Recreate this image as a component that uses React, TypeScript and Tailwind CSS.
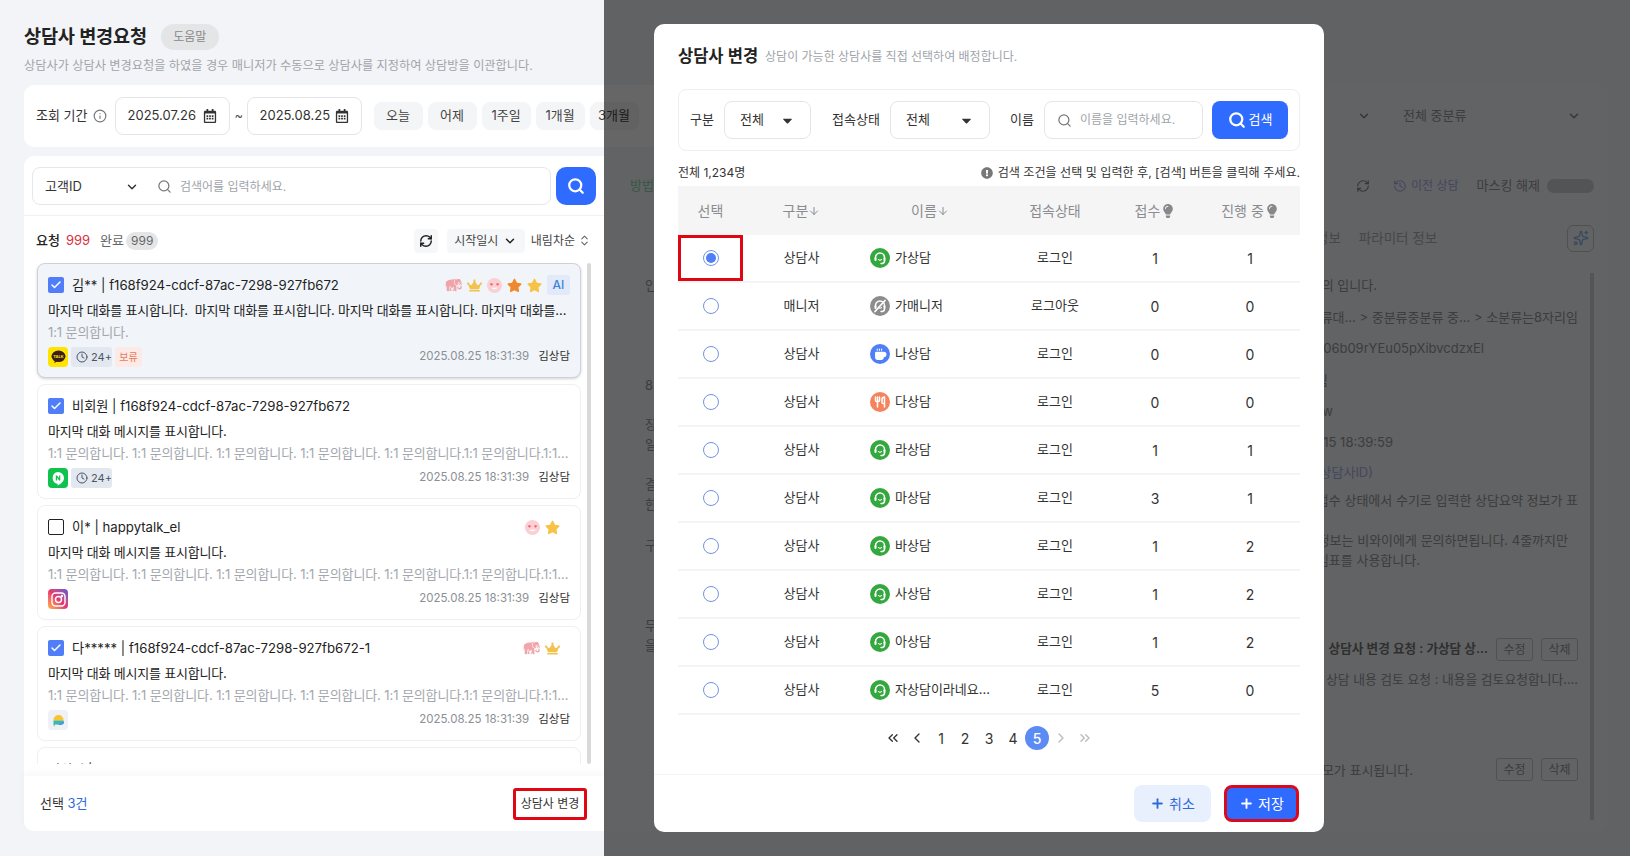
import React from "react";
import {
  Check, ChevronDown, ChevronLeft, ChevronRight, ChevronsLeft, ChevronsRight, ChevronsUpDown,
  Clock, Coffee, History, Info, Plus, RefreshCw, Search, Sparkles, Utensils, ArrowDown,
} from "lucide-react";
import { FaCrown, FaStar, FaRegCalendarAlt, FaExclamationCircle, FaLightbulb, FaCaretDown } from "react-icons/fa";
import { GiElephant } from "react-icons/gi";

const Elephant = () => <GiElephant className="w-[18px] h-[18px] text-[#f08f96] opacity-80" />;
const Crown = () => <FaCrown className="w-[15px] h-[15px] text-[#f2c14e]" />;
const Face = () => (
  <svg width="17" height="17" viewBox="0 0 18 18">
    <circle cx="9" cy="9" r="8" fill="#fbd0d4" />
    <path d="M4 7.5c1-1.3 2.6-1.3 3.5 0l-1.7 1.8zM10.500 7.500c1-1.300 2.600-1.300 3.500 0l-1.700 1.800z" fill="#ee5a64" />
    <path d="M5.500 11.500c1.800 1.800 5.200 1.800 7 0z" fill="#fff" />
  </svg>
);
const StarO = () => <FaStar className="w-[15px] h-[15px] text-[#ee8a2d]" />;
const StarY = () => <FaStar className="w-[15px] h-[15px] text-[#f6c344]" />;
const Slot = ({ children }: { children: React.ReactNode }) => (
  <span className="w-5 h-5 flex items-center justify-center">{children}</span>
);

const Kakao = () => (
  <span className="w-5 h-5 rounded-[4px] bg-[#fee500] flex items-center justify-center">
    <svg width="15" height="14" viewBox="0 0 15 14">
      <ellipse cx="7.500" cy="6.300" rx="7" ry="5.800" fill="#3b1e1e" />
      <path d="M4 10l-.7 3.300 3.400-2.500z" fill="#3b1e1e" />
      <text x="7.500" y="7.800" textAnchor="middle" fontSize="4" fontWeight="700" fill="#fee500" fontFamily="Inter, sans-serif">TALK</text>
    </svg>
  </span>
);
const Naver = () => (
  <span className="w-5 h-5 rounded-[4px] bg-[#0fc14d] flex items-center justify-center">
    <svg width="14" height="15" viewBox="0 0 14 15">
      <path d="M7 1a6 6 0 0 1 6 6c0 3.600-3.500 6-6.500 7.500l.3-1.600A6 6 0 0 1 7 1z" fill="#fff" />
      <path d="M4.800 4.500h1.300l2 2.800V4.500h1.200v5H8.100l-2-2.800v2.800H4.800z" fill="#0fc14d" />
    </svg>
  </span>
);
const Insta = () => (
  <span className="w-5 h-5 rounded-[4px] bg-gradient-to-tr from-[#fdb13f] via-[#e8316f] to-[#5a4fd0] flex items-center justify-center">
    <svg width="15" height="15" viewBox="0 0 15 15" fill="none" stroke="#fff" strokeWidth="1.400">
      <rect x="1" y="1" width="13" height="13" rx="3.500" />
      <circle cx="7.500" cy="7.500" r="3" />
      <circle cx="11" cy="4" r=".5" fill="#fff" />
    </svg>
  </span>
);
const Channel = () => (
  <span className="w-5 h-5 rounded-[4px] bg-[#eef1f6] flex items-center justify-center">
    <svg width="13" height="13" viewBox="0 0 13 13">
      <path d="M1.500 6a5 5 0 0 1 10 0v.500h-10z" fill="#f7c531" />
      <path d="M1.500 6.500h10c0 2.400-2 4-5 4H3l-.8 2-.7-2z" fill="#3fb6a8" />
      <path d="M5 10.500c3 0 6-1 6.500-4L12 9c-1 2-4 2.500-7 1.500z" fill="#3d7df0" />
    </svg>
  </span>
);
const Wait = () => (
  <span className="h-5 pl-[5px] w-[41px] rounded-[3px] bg-[#e3e8f0] flex items-center gap-[3px] text-[11px] text-[#4b5563]">
    <Clock className="w-3 h-3" strokeWidth={2} />
    24+
  </span>
);
const Box = ({ on }: { on: boolean }) =>
  on ? (
    <span className="w-4 h-4 rounded-[2px] bg-[#4f7ef8] flex items-center justify-center">
      <Check className="w-3 h-3 text-white" strokeWidth={3} />
    </span>
  ) : (
    <span className="w-4 h-4 rounded-[2px] border border-[#222] bg-white" />
  );

type CardData = {
  on: boolean; name: string; last: string; ask: string; channel: React.ReactNode;
  marks?: React.ReactNode[]; ai?: boolean; wait?: boolean; hold?: boolean; active?: boolean; noBox?: boolean;
};
const long = "1:1 문의합니다. 1:1 문의합니다. 1:1 문의합니다. 1:1 문의합니다. 1:1 문의합니다.1:1 문의합니다.1:1 문의합니다.1:1 문의합니다.";
const cards: CardData[] = [
  {
    on: true, name: "김** | f168f924-cdcf-87ac-7298-927fb672",
    last: "마지막 대화를 표시합니다.  마지막 대화를 표시합니다. 마지막 대화를 표시합니다. 마지막 대화를 표시합니다. 마지막 대화를 표시합니다.",
    ask: "1:1 문의합니다.", channel: <Kakao />, marks: [<Elephant />, <Crown />, <Face />, <StarO />, <StarY />], ai: true, wait: true, hold: true, active: true,
  },
  { on: true, name: "비회원 | f168f924-cdcf-87ac-7298-927fb672", last: "마지막 대화 메시지를 표시합니다.", ask: long, channel: <Naver />, wait: true },
  { on: false, name: "이* | happytalk_el", last: "마지막 대화 메시지를 표시합니다.", ask: long, channel: <Insta />, marks: [<Face />, <StarY />] },
  { on: true, name: "다***** | f168f924-cdcf-87ac-7298-927fb672-1", last: "마지막 대화 메시지를 표시합니다.", ask: long, channel: <Channel />, marks: [<Elephant />, <Crown />] },
  { on: false, noBox: true, name: "비회원 | f168f924-cdcf-87ac-7298-927fb672", last: "마지막 대화 메시지를 표시합니다.", ask: long, channel: <Naver /> },
];

const Card = ({ c }: { c: CardData }) => (
  <div className={`shrink-0 h-[115px] rounded-[8px] border pl-[10px] pr-[10px] pt-[11px] flex flex-col ${c.active ? "bg-[#f1f5f9] border-[#cbd2da] shadow-[0_1px_3px_rgba(0,0,0,0.18)]" : "bg-white border-[#eef0f3]"}`}>
    <div className="h-5 flex items-center">
      {!c.noBox && <Box on={c.on} />}
      <span className={`${c.noBox ? "mt-[3px]" : "ml-2 mt-px"} text-[13.200px] text-[#222]`}>{c.name}</span>
      <span className="ml-auto flex items-center">
        {c.marks?.map((m, i) => <Slot key={i}>{m}</Slot>)}
        {c.ai ? (
          <span className="ml-[3px] w-[23px] h-5 rounded-[3px] bg-[#e2e9f8] flex items-center justify-center text-[12px] font-medium text-[#3f83d8]">AI</span>
        ) : c.marks ? <span className="w-2" /> : null}
      </span>
    </div>
    <div className="mt-[5px] h-5 leading-5 text-[13px] tracking-[-0.2px] text-[#222] overflow-hidden text-ellipsis whitespace-pre">{c.last}</div>
    <div className="mt-[2px] h-5 leading-5 text-[13px] tracking-[-0.1px] text-[#a3a7ad] overflow-hidden text-ellipsis whitespace-pre">{c.ask}</div>
    <div className="mt-[5px] h-5 flex items-center">
      {c.channel}
      {c.wait && <span className="ml-[3px]"><Wait /></span>}
      {c.hold && <span className="ml-[3px] w-[27px] h-5 rounded-[3px] bg-[#fbeae6] flex items-center justify-center text-[10px] text-[#e8795a]">보류</span>}
      <span className="ml-auto text-[11.500px] text-[#8b8f96]">2025.08.25 18:31:39</span>
      <span className="ml-[9px] text-[11.500px] text-[#333]">김상담</span>
    </div>
  </div>
);

const DateBox = ({ v }: { v: string }) => (
  <div className="w-[115px] h-[38px] rounded-[8px] border border-[#e3e5e8] bg-white flex items-center px-3 justify-between text-[13px] text-[#333]">
    {v}
    <FaRegCalendarAlt className="w-[14px] h-[14px] text-[#333]" />
  </div>
);

const Chip = ({ t }: { t: string }) => (
  <span className="shrink-0 w-[49px] h-7 rounded-[8px] bg-[#f4f5f6] flex items-center justify-center text-[13px] text-[#444]">{t}</span>
);

const Left = () => (
  <div className="relative z-10 w-[604px] shrink-0 h-full pl-6 pt-6 flex flex-col">
    <div className="h-[26px] flex items-center">
      <span className="text-[18.600px] font-semibold text-[#222] tracking-[-0.2px]">상담사 변경요청</span>
      <span className="ml-[14px] w-[58px] h-[26px] rounded-full bg-[#e4e5e7] flex items-center justify-center text-[12px] text-[#888]">도움말</span>
    </div>
    <div className="mt-[6px] h-5 leading-5 text-[12.200px] text-[#a0a4aa]">상담사가 상담사 변경요청을 하였을 경우 매니저가 수동으로 상담사를 지정하여 상담방을 이관합니다.</div>
    <div className="mt-[9px] h-[62px] rounded-l-[10px] bg-white flex items-center pl-3 gap-[5px] w-[640px]">
      <span className="text-[13px] text-[#333]">조회 기간</span>
      <Info className="w-[14px] h-[14px] text-[#777] mr-[3px]" />
      <DateBox v="2025.07.26" />
      <span className="w-[7px] text-[13px] text-[#555] text-center">~</span>
      <DateBox v="2025.08.25" />
      <span className="w-[2px]" />
      <Chip t="오늘" /><Chip t="어제" /><Chip t="1주일" /><Chip t="1개월" /><Chip t="3개월" />
    </div>
    <div className="mt-[9px] flex-1 mb-[25px] rounded-l-[10px] bg-white flex flex-col min-h-0">
      <div className="h-[60px] shrink-0 px-2 pt-[11px] flex gap-[5px] border-b border-[#f0f1f3]">
        <div className="flex-1 h-[38px] rounded-[8px] border border-[#e5e7ea] flex items-center pl-3 pr-3 pt-[1px]">
          <span className="w-[80px] text-[13px] text-[#333]">고객ID</span>
          <ChevronDown className="w-[14px] h-[14px] text-[#333]" strokeWidth={2.500} />
          <Search className="ml-[18px] w-[15px] h-[15px] text-[#777]" />
          <span className="ml-2 text-[12px] text-[#a0a4aa]">검색어를 입력하세요.</span>
        </div>
        <button className="w-10 h-[38px] rounded-[10px] bg-[#2f6bff] flex items-center justify-center">
          <Search className="w-[18px] h-[18px] text-white" strokeWidth={3} />
        </button>
      </div>
      <div className="h-[47px] shrink-0 pl-3 pr-[13px] pt-[2px] flex items-center text-[13px]">
        <span className="font-medium text-[#222]">요청</span>
        <span className="ml-[6px] text-[#d9303e]">999</span>
        <span className="ml-[10px] text-[#666]">완료</span>
        <span className="ml-[2px] px-[5px] rounded-full bg-[#e4e5e7] text-[#666] text-[12px] leading-[18px]">999</span>
        <span className="ml-auto w-6 h-6 rounded-[4px] bg-[#f6f7f8] flex items-center justify-center">
          <RefreshCw className="w-[14px] h-[14px] text-[#222]" strokeWidth={2.500} />
        </span>
        <span className="ml-[9px] w-[78px] h-6 rounded-[4px] bg-[#f6f7f8] flex items-center justify-center gap-[5px] text-[12px] text-[#444]">
          시작일시 <ChevronDown className="w-[14px] h-[14px] text-[#222]" strokeWidth={2.500} />
        </span>
        <span className="ml-[6px] text-[12px] text-[#444]">내림차순</span>
        <ChevronsUpDown className="ml-[3px] w-[13px] h-[13px] text-[#666]" />
      </div>
      <div className="h-[501px] shrink-0 overflow-hidden flex pl-[13px]">
        <div className="w-[544px] shrink-0 flex flex-col gap-[6px]">
          {cards.map((c, i) => <Card key={i} c={c} />)}
        </div>
        <div className="ml-[6px] w-[4px] h-full rounded-full bg-[#d9d9d9]" />
      </div>
      <div className="mt-3 flex-1 rounded-bl-[10px] bg-white shadow-[0_-4px_8px_rgba(0,0,0,0.03)] pl-4 pr-[17px] flex items-center justify-between">
        <span className="text-[13px] text-[#333]">선택 <span className="text-[#2f6bd8]">3건</span></span>
        <button className="w-[74px] h-[32px] border-[3px] border-[#e00614] rounded-[3px] text-[12px] text-[#333] flex items-center justify-center">상담사 변경</button>
      </div>
    </div>
  </div>
);

const ln = "whitespace-nowrap text-[13px] text-[#96989c] h-5 leading-5";
const BehindBtn = ({ t }: { t: string }) => (
  <span className="w-[37px] h-[23px] border border-[#c8c8cc] rounded-[3px] flex items-center justify-center text-[12px] text-[#96989c]">{t}</span>
);

const Behind = () => (
  <div className="flex-1 min-w-0 h-full flex whitespace-nowrap">
    <div className="w-[1004px] shrink-0 mt-[85px] mb-[25px] bg-[#f6f7f9] rounded-r-[10px] flex flex-col overflow-hidden">
      <div className="h-[71px] shrink-0 pb-[9px] flex items-center pl-[753px] text-[13px] text-[#96989c]">
        <ChevronDown className="w-[14px] h-[14px] text-[#888]" strokeWidth={2.500} />
        <span className="ml-[32px]">전체 중분류</span>
        <ChevronDown className="ml-[101px] w-[14px] h-[14px] text-[#888]" strokeWidth={2.500} />
      </div>
      <div className="h-[60px] shrink-0 flex items-center pl-[26px] pr-[14px] text-[13px] text-[#96989c]">
        <span className="text-[#90d8b0]">방법</span>
        <RefreshCw className="ml-auto w-[14px] h-[14px] text-[#888]" />
        <span className="ml-[23px] flex items-center gap-[4px] text-[12px] text-[#a8b0f0]"><History className="w-[14px] h-[14px]" />이전 상담</span>
        <span className="ml-[18px]">마스킹 해제</span>
        <span className="ml-[7px] w-[47px] h-[14px] rounded-full bg-[#d0d1d4]" />
      </div>
      <div className="h-[44px] shrink-0 flex items-center pl-[712px] pr-[14px] text-[13.500px] text-[#b0b2b6]">
        <span>정보</span><span className="ml-[18px]">파라미터 정보</span>
        <span className="ml-auto w-[27px] h-[27px] rounded-[6px] border border-[#c8c8cc] flex items-center justify-center">
          <Sparkles className="w-4 h-4 text-[#8fb8e8]" />
        </span>
      </div>
      <div className="flex-1 flex relative">
        <div className="w-[60px] pl-[41px] shrink-0 flex flex-col">
          <div className={`${ln} mt-[15px]`}>인입</div>
          <div className={`${ln} mt-[80px]`}>8</div>
          <div className={`${ln} mt-[19px]`}>장</div>
          <div className={ln}>일</div>
          <div className={`${ln} mt-[20px]`}>결</div>
          <div className={ln}>한</div>
          <div className={`${ln} mt-[21px]`}>구</div>
          <div className={`${ln} mt-[60px]`}>무</div>
          <div className={ln}>을</div>
        </div>
        <div className="flex-1 pr-[30px] flex flex-col items-end">
          <div className={`${ln} mt-[15px] mr-[201px]`}>상담 문의 입니다.</div>
          <div className={`${ln} mt-[12px]`}>대분류대분류대... &gt; 중분류중분류 중... &gt; 소분류는8자리임</div>
          <div className={`${ln} mt-[11px] mr-[94px]`}>b06b09rYEu05pXibvcdzxEl</div>
          <div className={`${ln} mt-[12px] mr-[250px]`}>완료됨</div>
          <div className={`${ln} mt-[11px] mr-[245px]`}>new</div>
          <div className={`${ln} mt-[11px] mr-[185px]`}>2025.08.15 18:39:59</div>
          <div className={`${ln} mt-[10px] mr-[205px] !text-[#a8b0f0]`}>상담사ID)</div>
          <div className={`${ln} mt-[8px]`}>접수 상태에서 수기로 입력한 상담요약 정보가 표</div>
          <div className={`${ln} mt-[20px] mr-[10px]`}>정보는 비와이에게 문의하면됩니다. 4줄까지만</div>
          <div className={`${ln} mr-[158px]`}>임표를 사용합니다.</div>
          <div className="mt-[68px] h-[23px] flex items-center gap-[8px]">
            <span className="text-[12.600px] font-semibold text-[#777] whitespace-nowrap">상담사 변경 요청 : 가상담 상...</span>
            <BehindBtn t="수정" /><BehindBtn t="삭제" />
          </div>
          <div className={`${ln} !text-[12.800px] mt-[9px]`}>상담 내용 검토 요청 : 내용을 검토요청합니다....</div>
          <div className="mt-[68px] h-[23px] flex items-center gap-[8px]">
            <span className={`${ln} mr-[75px]`}>모가 표시됩니다.</span>
            <BehindBtn t="수정" /><BehindBtn t="삭제" />
          </div>
        </div>
        <div className="absolute right-[14px] top-[13px] bottom-[11px] w-1 bg-[#d4d5d8]" />
      </div>
    </div>
  </div>
);

const Radio = ({ on }: { on?: boolean }) => (
  <span className="w-4 h-4 rounded-full border border-[#6f94e8] flex items-center justify-center bg-white">
    {on && <span className="w-[10px] h-[10px] rounded-full bg-[#4f7ef8]" />}
  </span>
);

const Agent = ({ off }: { off?: boolean }) => (
  <svg width="14" height="14" viewBox="0 0 14 14" fill="none" stroke="#fff" strokeWidth="1.500" strokeLinecap="round">
    <path d="M2.500 7.500V6.500a4.500 4.500 0 0 1 9 0v1" />
    <rect x="1.500" y="6.500" width="2" height="3.500" rx=".8" fill="#fff" stroke="none" />
    <rect x="10.500" y="6.500" width="2" height="3.500" rx=".8" fill="#fff" stroke="none" />
    <path d="M11.500 10c0 1.800-1.500 2.600-3.500 2.600" />
    <path d="M5.500 8.500c.8.900 2.200.900 3 0" strokeWidth="1.100" />
    {off && <path d="M2 12.500L12 1.500" strokeWidth="1.800" />}
  </svg>
);

const Av = ({ k }: { k: string }) => {
  if (k === "g") return <span className="w-5 h-5 rounded-full bg-[#34a83e] flex items-center justify-center"><Agent /></span>;
  if (k === "x") return <span className="w-5 h-5 rounded-full bg-[#8c8c8c] flex items-center justify-center"><Agent off /></span>;
  if (k === "b")
    return <span className="w-5 h-5 rounded-full bg-[#4f7ef8] flex items-center justify-center"><Coffee className="w-[13px] h-[13px] text-white" fill="#fff" strokeWidth={2} /></span>;
  return <span className="w-5 h-5 rounded-full bg-[#f5845c] flex items-center justify-center"><Utensils className="w-3 h-3 text-white" strokeWidth={3} /></span>;
};

const rows = [
  ["상담사", "g", "가상담", "로그인", "1", "1"],
  ["매니저", "x", "가매니저", "로그아웃", "0", "0"],
  ["상담사", "b", "나상담", "로그인", "0", "0"],
  ["상담사", "o", "다상담", "로그인", "0", "0"],
  ["상담사", "g", "라상담", "로그인", "1", "1"],
  ["상담사", "g", "마상담", "로그인", "3", "1"],
  ["상담사", "g", "바상담", "로그인", "1", "2"],
  ["상담사", "g", "사상담", "로그인", "1", "2"],
  ["상담사", "g", "아상담", "로그인", "1", "2"],
  ["상담사", "g", "자상담이라네요...", "로그인", "5", "0"],
];
const cols = "grid grid-cols-[65px_117px_140px_110px_90px_100px]";

const Sel = ({ w }: { w: string }) => (
  <div className={`${w} h-[38px] rounded-[8px] border border-[#e3e5e8] flex items-center justify-between pl-[15px] pr-[15px] text-[13px] text-[#333]`}>
    전체
    <FaCaretDown className="w-[15px] h-[15px] text-[#333]" />
  </div>
);

const Modal = () => (
  <div className="absolute z-30 left-[654px] top-6 w-[670px] h-[808px] bg-white rounded-[10px] flex flex-col">
    <div className="px-6 pt-[22px] h-5 box-content flex items-center">
      <span className="text-[16.500px] font-semibold text-[#222]">상담사 변경</span>
      <span className="ml-[7px] mt-[2px] text-[12px] text-[#a0a4aa]">상담이 가능한 상담사를 직접 선택하여 배정합니다.</span>
    </div>
    <div className="mx-6 mt-[23px] h-[62px] rounded-[8px] border border-[#eeeff1] flex items-center px-[11px] text-[13px] text-[#333]">
      <span className="w-[24px]">구분</span>
      <span className="ml-[10px]"><Sel w="w-[87px]" /></span>
      <span className="ml-[21px] w-[48px]">접속상태</span>
      <span className="ml-[10px]"><Sel w="w-[100px]" /></span>
      <span className="ml-[20px] w-[24px]">이름</span>
      <div className="ml-[10px] w-[159px] h-[38px] rounded-[8px] border border-[#e3e5e8] flex items-center pl-3">
        <Search className="w-[15px] h-[15px] text-[#777]" />
        <span className="ml-2 text-[12px] text-[#a0a4aa]">이름을 입력하세요.</span>
      </div>
      <button className="ml-[9px] w-[76px] h-[38px] rounded-[8px] bg-[#2f6bff] text-white flex items-center justify-center gap-[3px]">
        <Search className="w-[18px] h-[18px]" strokeWidth={3} />검색
      </button>
    </div>
    <div className="mx-6 h-[35px] shrink-0 pt-[9px] flex items-center justify-between text-[12px] text-[#333]">
      <span>전체 1,234명</span>
      <span className="flex items-center gap-[5px] text-[12.100px]"><FaExclamationCircle className="w-[12px] h-[12px] text-[#777]" />검색 조건을 선택 및 입력한 후, [검색] 버튼을 클릭해 주세요.</span>
    </div>
    <div className="mx-6">
      <div className={`${cols} h-[49px] bg-[#f5f5f5] items-center text-center text-[14px] text-[#8a8c90]`}>
        <span>선택</span>
        <span className="flex items-center justify-center">구분<ArrowDown className="w-3 h-3" /></span>
        <span className="flex items-center justify-center">이름<ArrowDown className="w-3 h-3" /></span>
        <span>접속상태</span>
        <span className="flex items-center justify-center gap-px">접수<FaLightbulb className="w-[14px] h-[14px] text-[#888]" /></span>
        <span className="flex items-center justify-center gap-px">진행 중<FaLightbulb className="w-[14px] h-[14px] text-[#888]" /></span>
      </div>
      {rows.map((r, i) => (
        <div key={i} className={`${cols} h-12 border-b-2 border-[#f3f4f5] items-center text-center text-[13px] text-[#333]`}>
          <span className={`h-full flex items-center justify-center ${i === 0 ? "border-[3px] border-[#e00614]" : ""}`}><Radio on={i === 0} /></span>
          <span>{r[0]}</span>
          <span className="pl-[10px] flex items-center gap-[5px]"><Av k={r[1]} />{r[2]}</span>
          <span>{r[3]}</span>
          <span className="text-[14px]">{r[4]}</span>
          <span className="text-[14px]">{r[5]}</span>
        </div>
      ))}
    </div>
    <div className="h-[60px] shrink-0 flex items-center justify-center text-[14px] text-[#333] border-b border-[#f3f4f5]">
      <div className="flex items-center -mt-[13px]">
        <span className="w-6 flex justify-center"><ChevronsLeft className="w-4 h-4" /></span>
        <span className="w-6 flex justify-center"><ChevronLeft className="w-4 h-4" /></span>
        <span className="w-6 text-center">1</span>
        <span className="w-6 text-center">2</span>
        <span className="w-6 text-center">3</span>
        <span className="w-6 text-center">4</span>
        <span className="w-6 h-6 rounded-full bg-[#5b8cf5] text-white font-medium flex items-center justify-center">5</span>
        <span className="w-6 flex justify-center"><ChevronRight className="w-4 h-4 text-[#bbb]" /></span>
        <span className="w-6 flex justify-center"><ChevronsRight className="w-4 h-4 text-[#bbb]" /></span>
      </div>
    </div>
    <div className="flex-1 pr-[25px] pt-[10px] flex justify-end gap-[13px]">
      <button className="w-[77px] h-[37px] rounded-[8px] bg-[#e9f0fd] text-[#2f6bd8] text-[14px] flex items-center justify-center gap-[4px]">
        <Plus className="w-[15px] h-[15px]" strokeWidth={3} />취소
      </button>
      <button className="w-[75px] h-[37px] rounded-[8px] bg-[#2f6bff] border-[3px] border-[#d90a1e] text-white text-[14px] flex items-center justify-center gap-[4px]">
        <Plus className="w-[15px] h-[15px]" strokeWidth={3} />저장
      </button>
    </div>
  </div>
);

export default function App() {
  return (
    <div className="relative w-[1630px] h-[856px] overflow-hidden bg-[#f2f4f7] flex font-['Inter','Noto_Sans_CJK_KR',sans-serif]">
      <Left />
      <Behind />
      <div className="absolute z-20 left-[604px] top-0 bottom-0 right-0 bg-black/60" />
      <Modal />
    </div>
  );
}
